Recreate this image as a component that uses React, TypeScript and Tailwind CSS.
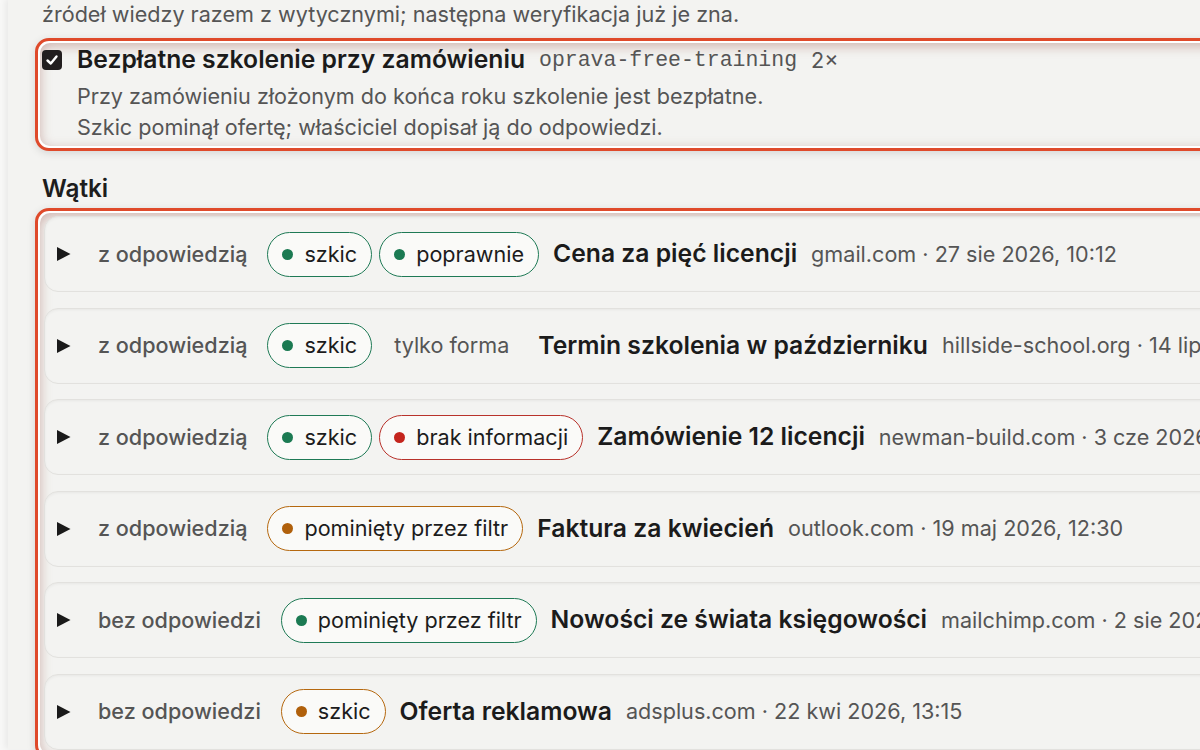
import React from "react";

type Tone = "green" | "red" | "orange" | "plain";

const pillTone: Record<Tone, string> = {
  green: "border-[#1f7a56] bg-[#fafaf8]",
  red: "border-[#b8322b] bg-[#fafaf8]",
  orange: "border-[#b5680f] bg-[#fafaf8]",
  plain: "border-transparent bg-transparent text-[#555555]",
};
const dotTone: Record<Tone, string> = {
  green: "bg-[#1b7a52]",
  red: "bg-[#c4251d]",
  orange: "bg-[#b0600b]",
  plain: "",
};

function Pill({ tone, text }: { tone: Tone; text: string }) {
  return (
    <span
      className={`flex h-[45px] items-center rounded-full border-[1.5px] px-[14px] text-[21.6px] ${pillTone[tone]} ${
        tone === "plain" ? "" : "text-[#1c1c1c]"
      }`}
    >
      {tone !== "plain" && <span className={`mr-[11px] h-[11px] w-[11px] rounded-full ${dotTone[tone]}`} />}
      {text}
    </span>
  );
}

type Row = {
  label: string;
  pills: { tone: Tone; text: string }[];
  title: string;
  meta: string;
};

const rows: Row[] = [
  {
    label: "z odpowiedzią",
    pills: [
      { tone: "green", text: "szkic" },
      { tone: "green", text: "poprawnie" },
    ],
    title: "Cena za pięć licencji",
    meta: "gmail.com · 27 sie 2026, 10:12",
  },
  {
    label: "z odpowiedzią",
    pills: [
      { tone: "green", text: "szkic" },
      { tone: "plain", text: "tylko forma" },
    ],
    title: "Termin szkolenia w październiku",
    meta: "hillside-school.org · 14 lip 2026, 09:05",
  },
  {
    label: "z odpowiedzią",
    pills: [
      { tone: "green", text: "szkic" },
      { tone: "red", text: "brak informacji" },
    ],
    title: "Zamówienie 12 licencji",
    meta: "newman-build.com · 3 cze 2026, 14:40",
  },
  {
    label: "z odpowiedzią",
    pills: [{ tone: "orange", text: "pominięty przez filtr" }],
    title: "Faktura za kwiecień",
    meta: "outlook.com · 19 maj 2026, 12:30",
  },
  {
    label: "bez odpowiedzi",
    pills: [{ tone: "green", text: "pominięty przez filtr" }],
    title: "Nowości ze świata księgowości",
    meta: "mailchimp.com · 2 sie 2026, 08:00",
  },
  {
    label: "bez odpowiedzi",
    pills: [{ tone: "orange", text: "szkic" }],
    title: "Oferta reklamowa",
    meta: "adsplus.com · 22 kwi 2026, 13:15",
  },
];

function Triangle() {
  return (
    <svg width="14" height="16" viewBox="0 0 14 16" className="shrink-0">
      <polygon points="0,1 13.5,8 0,15" fill="#1a1a1a" />
    </svg>
  );
}

function ThreadRow({ row }: { row: Row }) {
  return (
    <div className="flex h-[76px] items-center whitespace-nowrap rounded-[14px] border border-[#e2e1de] bg-[#f3f3f1] pl-[12px] shadow-[inset_0_1px_3px_rgba(0,0,0,0.05)]">
      <Triangle />
      <span className="ml-[27px] text-[21.6px] font-medium text-[#555555]">{row.label}</span>
      <div className="ml-[20px] flex gap-[7px]">
        {row.pills.map((p, i) => (
          <Pill key={i} tone={p.tone} text={p.text} />
        ))}
      </div>
      <span className="ml-[14px] text-[24.7px] font-semibold text-[#1b1b1b]">{row.title}</span>
      <span className="ml-[14px] text-[21.6px] text-[#555555]">{row.meta}</span>
    </div>
  );
}

export default function App() {
  return (
    <div className="h-[750px] w-[1200px] overflow-hidden bg-[#f8f8f7] font-['Inter',sans-serif]">
      <div className="ml-[8px] h-full w-[1500px] bg-[#f3f3f1] pl-[34px] shadow-[-3px_0_6px_rgba(0,0,0,0.06)]">
        <p className="-mt-[1px] text-[21.6px] leading-[30px] text-[#555555]">
          źródeł wiedzy razem z wytycznymi; następna weryfikacja już je zna.
        </p>

        <div className="-ml-[7px] mt-[9px] rounded-[14px] border-[3px] border-[#df4a2b] bg-white p-[2px] shadow-[0_2px_8px_rgba(0,0,0,0.12)]">
          <div className="rounded-[10px] bg-[#f3f3f1] pb-[3px] pl-[2px] shadow-[inset_0_3px_12px_rgba(150,80,70,0.4)]">
            <div className="flex h-[34px] items-center whitespace-nowrap">
              <div className="flex h-[20px] w-[20px] items-center justify-center rounded-[4px] bg-[#221e1f]">
                <svg width="14" height="14" viewBox="0 0 14 14">
                  <path d="M2.5 7.5 L5.8 10.5 L11.5 3.5" stroke="white" strokeWidth="2.4" fill="none" strokeLinecap="round" strokeLinejoin="round" />
                </svg>
              </div>
              <span className="ml-[15px] text-[24.7px] font-semibold text-[#1b1b1b]">
                Bezpłatne szkolenie przy zamówieniu
              </span>
              <span className="ml-[14px] font-['Liberation_Mono',monospace] text-[21.5px] text-[#555555]">
                oprava-free-training
              </span>
              <span className="ml-[14px] text-[21.6px] text-[#555555]">2×</span>
            </div>
            <div className="mt-[4px] pl-[35px] text-[21.6px] leading-[31px] text-[#555555]">
              <p>Przy zamówieniu złożonym do końca roku szkolenie jest bezpłatne.</p>
              <p>Szkic pominął ofertę; właściciel dopisał ją do odpowiedzi.</p>
            </div>
          </div>
        </div>

        <h2 className="mt-[22px] text-[24.3px] font-semibold leading-[30px] text-[#1d1d1d]">Wątki</h2>

        <div className="-ml-[7px] mt-[5px] rounded-[14px] border-[3px] border-[#df4a2b] bg-white p-[2px] shadow-[0_2px_8px_rgba(0,0,0,0.12)]">
          <div className="flex flex-col gap-[15.5px] rounded-[10px] bg-[#f3f3f1] pb-[4px] pl-[4px] pt-[3px] shadow-[inset_0_3px_12px_rgba(150,80,70,0.4)]">
            {rows.map((r, i) => (
              <ThreadRow key={i} row={r} />
            ))}
          </div>
        </div>
      </div>
    </div>
  );
}
